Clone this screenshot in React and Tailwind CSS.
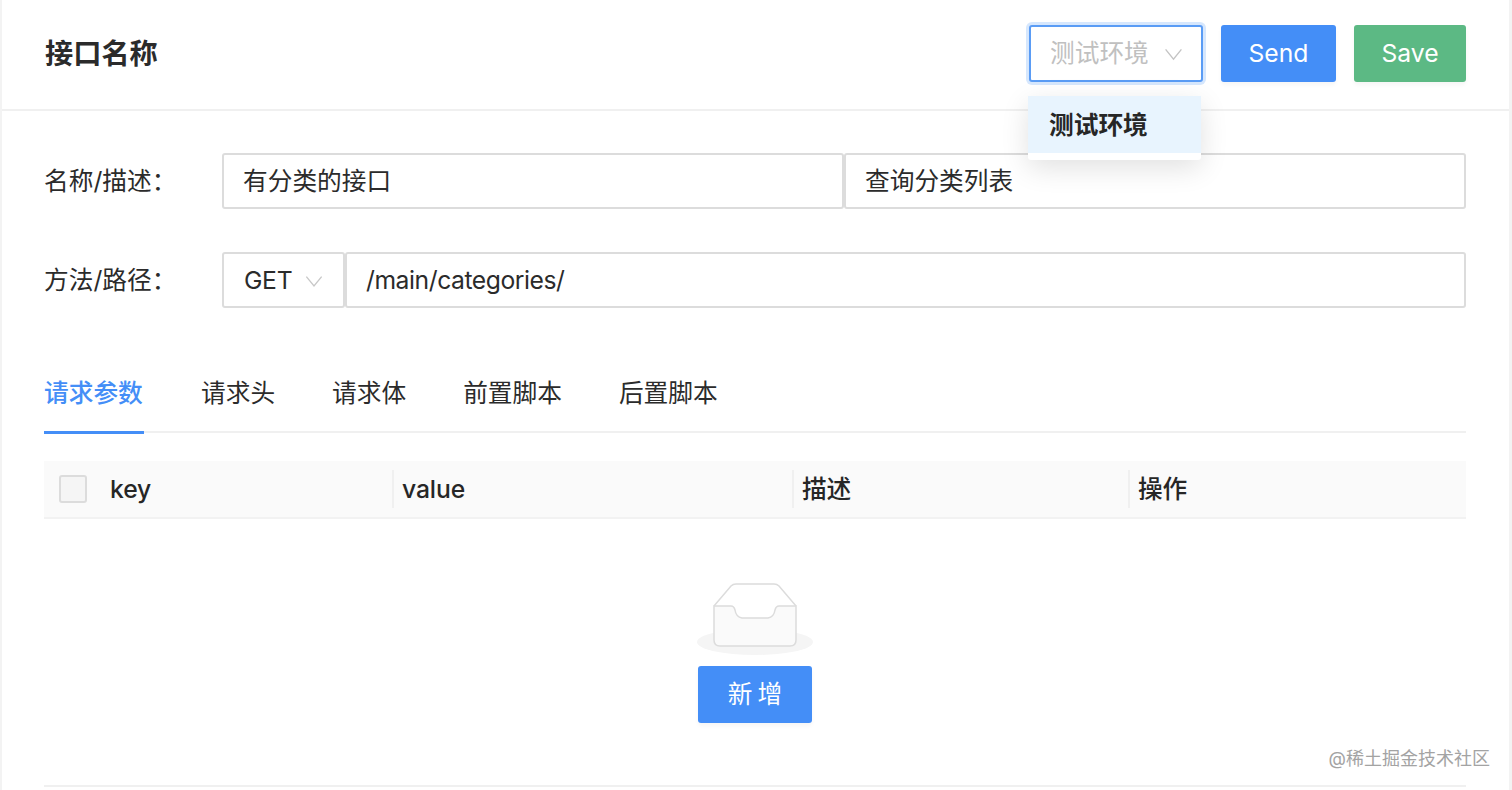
function Chevron({ className }) {
  return (
    <svg viewBox="0 0 20 14" fill="none" className={className}>
      <path d="M1.5 1.5 L10 12 L18.5 1.5" stroke="currentColor" strokeWidth="1.5" />
    </svg>
  );
}

function Field({ children, className }) {
  return (
    <div className={"h-[56px] flex items-center border-2 border-[#dcdcdc] rounded-[3px] bg-white pt-[2px] text-[24.7px] text-[#2b2b2b] " + className}>
      {children}
    </div>
  );
}

function FormRow({ label, children, className }) {
  return (
    <div className={"flex items-center " + className}>
      <div className="w-[178px] shrink-0 pt-[2px] text-[24.7px] text-[#2b2b2b]">{label}</div>
      <div className="flex flex-1">{children}</div>
    </div>
  );
}

const tabs = ["请求头", "请求体", "前置脚本", "后置脚本"];

function Head({ children, w }) {
  return (
    <div className={"relative flex items-center pl-[10px] pt-[2px] text-[24.7px] font-medium tracking-[-0.1px] text-[#262626] " + w}>
      <span className="absolute left-0 top-[9px] bottom-[9px] w-[2px] bg-[#f0f0f0]" />
      {children}
    </div>
  );
}

export default function App() {
  return (
    <div className="relative h-[790px] w-[1512px] overflow-hidden bg-white border-l-2 border-r-[3px] border-[#f3f3f3] font-['Inter','Noto_Sans_CJK_SC',sans-serif] antialiased">
      <header className="h-[111px] border-b-2 border-[#f0f0f0] flex items-center justify-between pl-[43px] pr-[43px]">
        <h1 className="text-[28.2px] font-semibold text-[#2b2b2b]">接口名称</h1>
        <div className="flex items-center gap-[18px] relative top-[-1px]">
          <div className="w-[174px] h-[57px] flex items-center justify-between pl-[19px] pr-[18px] border-2 border-[#5a9cf5] rounded-[3px] bg-white shadow-[0_0_0_3px_#d6e7fd] text-[24.7px] text-[#c0c0c0]">
            <span className="pt-[1px]">测试环境</span>
            <Chevron className="w-[19px] h-[13px] mt-[2px] text-[#c4c4c4]" />
          </div>
          <button className="w-[115px] h-[57px] rounded-[3px] bg-[#448ef7] text-white text-[24.7px] shadow-[0_3px_4px_rgba(0,0,0,0.04)]">Send</button>
          <button className="w-[112px] h-[57px] rounded-[3px] bg-[#5cb984] text-white text-[24.7px] shadow-[0_3px_4px_rgba(0,0,0,0.04)]">Save</button>
        </div>
      </header>

      <main className="pl-[42px] pr-[43px]">
        <FormRow label="名称/描述：" className="mt-[42px]">
          <Field className="flex-1 pl-[19px]">有分类的接口</Field>
          <Field className="flex-1 pl-[19px]">查询分类列表</Field>
        </FormRow>
        <FormRow label="方法/路径：" className="mt-[43px]">
          <Field className="w-[123px] shrink-0 justify-between pl-[20px] pr-[20px] tracking-[-0.3px]">
            <span>GET</span>
            <Chevron className="w-[18px] h-[13px] text-[#c8c8c8]" />
          </Field>
          <Field className="flex-1 pl-[19px] tracking-[-0.45px]">/main/categories/</Field>
        </FormRow>

        <div className="mt-[57px] h-[68px] flex items-start gap-[57px] border-b-2 border-[#f0f0f0] text-[24.7px] text-[#2b2b2b] leading-[56px]">
          <div className="relative h-[68px] w-[100px] text-[#448ef7] font-medium">
            请求参数
            <span className="absolute left-0 right-0 bottom-[-1px] h-[3px] bg-[#448ef7]" />
          </div>
          {tabs.map((t) => (
            <div key={t}>{t}</div>
          ))}
        </div>

        <div className="mt-[28px] h-[58px] flex bg-[#fafafa] border-b-2 border-[#f2f2f2]">
          <div className="w-[348px] flex items-center pl-[15px] gap-[23px] text-[24.7px] font-medium tracking-[-0.1px] text-[#262626]">
            <span className="w-[28px] h-[28px] rounded-[3px] border-2 border-[#dcdcdc] bg-[#f5f5f5]" />
            <span className="pt-[2px]">key</span>
          </div>
          <Head w="w-[400px]">value</Head>
          <Head w="w-[336px]">描述</Head>
          <Head w="flex-1">操作</Head>
        </div>

        <div className="mt-[63px] flex flex-col items-center">
          <svg width="116" height="74" viewBox="0 0 116 74" fill="none" className="block">
            <ellipse cx="58" cy="60" rx="58" ry="13" fill="#f5f5f5" />
            <path d="M17 24 L34 4 Q36 2 39 2 L77 2 Q80 2 82 4 L99 24" fill="#fff" stroke="#dcdcdc" strokeWidth="1.5" />
            <path d="M17 24 L34 24 Q37 24 38 28 Q39 35 45 36 L71 36 Q77 35 78 28 Q79 24 82 24 L99 24 L99 58 Q99 64 93 64 L23 64 Q17 64 17 58 Z" fill="#fafafa" stroke="#dcdcdc" strokeWidth="1.5" />
          </svg>
          <button className="mt-[10px] w-[114px] h-[57px] rounded-[3px] bg-[#448ef7] text-white text-[24.7px] tracking-[5px] pl-[5px] shadow-[0_3px_4px_rgba(0,0,0,0.04)]">新增</button>
        </div>

        <div className="mt-[62px] h-[2px] bg-[#f0f0f0]" />
      </main>

      <div className="absolute left-[1026px] top-[96px] w-[173px] h-[64px] bg-white rounded-[3px] shadow-[0_8px_28px_rgba(0,0,0,0.12)]">
        <div className="h-[57px] flex items-center pl-[21px] pt-[2px] bg-[#e8f4fe] text-[24.7px] font-semibold text-[#262626]">测试环境</div>
      </div>

      <div className="absolute right-[19px] top-[745px] text-[18px] text-[#a3a3a3]">@稀土掘金技术社区</div>
    </div>
  );
}
